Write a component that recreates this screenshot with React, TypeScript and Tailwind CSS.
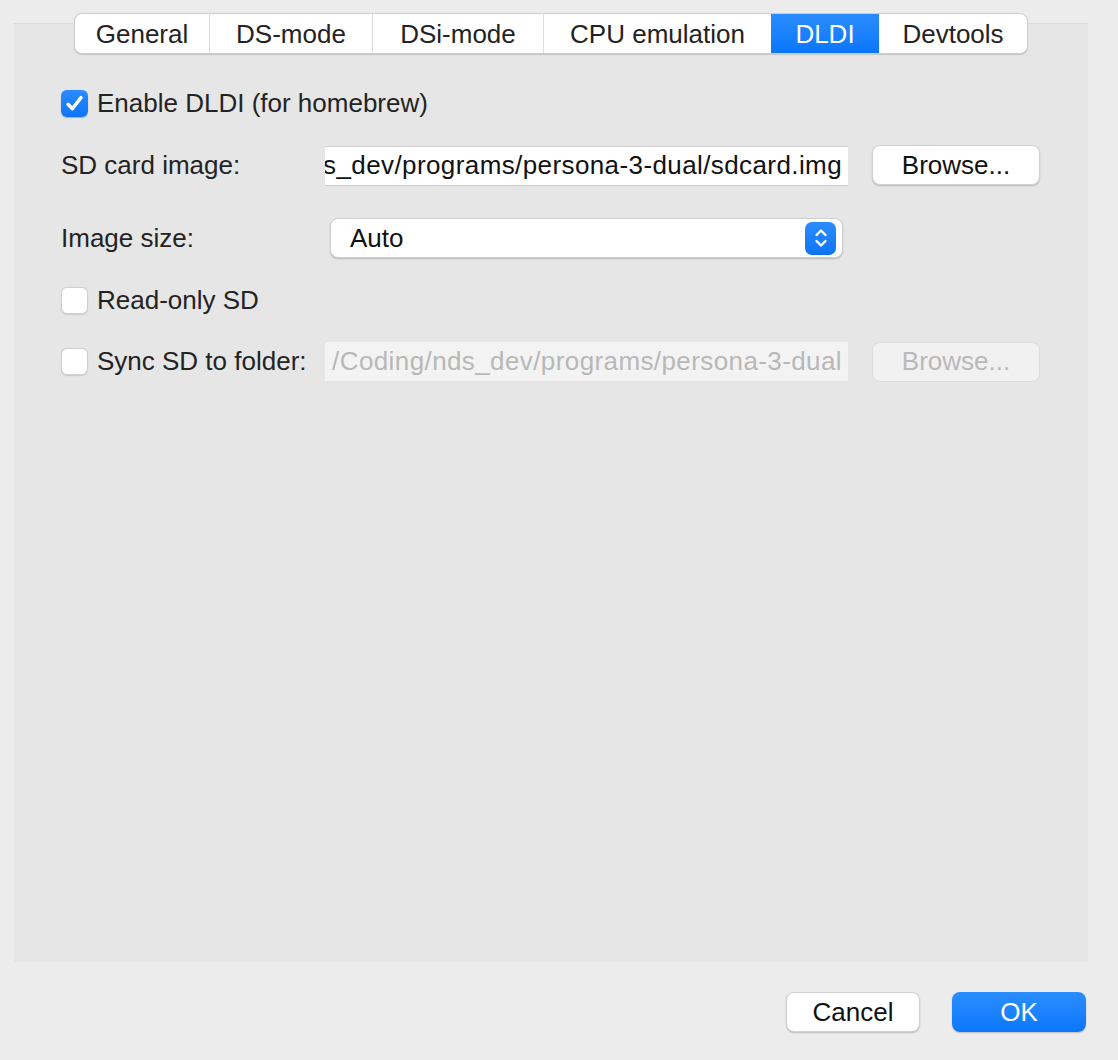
import { ReactNode } from "react"

const tabs = [
  { title: "General", w: "w-[134px]" },
  { title: "DS-mode", w: "w-[163px]" },
  { title: "DSi-mode", w: "w-[171px]" },
  { title: "CPU emulation", w: "w-[228px]" },
  { title: "DLDI", w: "w-[108px]" },
  { title: "Devtools", w: "w-[148px]" },
]

const activeTab = "DLDI"

function Checkbox({ checked }: { checked?: boolean }) {
  if (checked) {
    return (
      <span className="flex h-[27px] w-[27px] shrink-0 items-center justify-center rounded-[6px] bg-gradient-to-b from-[#2b8cff] to-[#0a74f5] shadow-[0_0.5px_1px_rgba(0,0,0,0.25)]">
        <svg width="21" height="21" viewBox="0 0 21 21" fill="none">
          <path
            d="M4 11.2 L8.4 15.8 L17 4.6"
            stroke="white"
            strokeWidth="3.4"
            strokeLinecap="round"
            strokeLinejoin="round"
          />
        </svg>
      </span>
    )
  }
  return (
    <span className="h-[27px] w-[27px] shrink-0 rounded-[6px] border border-[#cfcfcf] bg-white shadow-[0_0.5px_1px_rgba(0,0,0,0.12)]" />
  )
}

function PushButton({
  children,
  disabled,
  className = "",
}: {
  children: ReactNode
  disabled?: boolean
  className?: string
}) {
  return (
    <button
      className={`flex h-[40px] items-center justify-center rounded-[8px] border-[0.5px] ${
        disabled
          ? "border-[#dcdcdc] bg-[#f1f1f1] text-[#b9b9b9]"
          : "border-[#d0d0d0] bg-white text-[#111] shadow-[0_1px_1.5px_rgba(0,0,0,0.2)]"
      } ${className}`}
    >
      {children}
    </button>
  )
}

// path fields keep the tail of the path visible, like a scrolled text field
function PathField({ path, disabled }: { path: string; disabled?: boolean }) {
  return (
    <div
      className={`flex h-[39px] w-[523px] items-center justify-end overflow-hidden whitespace-nowrap pr-[6px] tracking-[0.4px] ${
        disabled
          ? "bg-[#f3f3f3] text-[#b8b8b8]"
          : "border-t border-[#cfcfcf] bg-white text-[#111] shadow-[0_1px_0_#c9c9c9]"
      }`}
    >
      <span>{path}</span>
    </div>
  )
}

export default function App() {
  return (
    <div
      className="flex h-[1060px] w-[1118px] flex-col bg-[#ececec] text-[26px] text-[#232323]"
      style={{ fontFamily: '"Liberation Sans", Arial, sans-serif' }}
    >
      <div className="ml-[14px] mt-[23px] h-[939px] w-[1074px] border-t border-[#dcdcdc] bg-[#e6e6e6]">
        {/* tab strip sits over the panel's top edge */}
        <div className="-mt-[11px] flex justify-center">
          <div className="flex h-[41px] overflow-hidden rounded-[8px] border-[0.5px] border-[#cdcdcd] bg-white shadow-[0_1px_1px_rgba(0,0,0,0.15)]">
            {tabs.map((tab, idx) => {
              const active = tab.title === activeTab
              const prevActive = idx > 0 && tabs[idx - 1].title === activeTab
              return (
                <div
                  key={tab.title}
                  className={`flex items-center justify-center pt-[1px] ${tab.w} ${
                    active
                      ? "bg-gradient-to-b from-[#2a8cff] to-[#0876fb] text-white"
                      : "text-[#232323]"
                  } ${
                    idx > 0 && !active && !prevActive
                      ? "border-l border-[#dedede]"
                      : ""
                  }`}
                >
                  {tab.title}
                </div>
              )
            })}
          </div>
        </div>

        <div className="flex flex-col pl-[47px]">
          <div className="mt-[36px] flex h-[26px] items-center gap-[9px]">
            <Checkbox checked />
            <span>Enable DLDI (for homebrew)</span>
          </div>

          <div className="mt-[29px] flex h-[40px] items-center">
            <span className="w-[264px]">SD card image:</span>
            <PathField path="ds_dev/programs/persona-3-dual/sdcard.img" />
            <PushButton className="ml-[24px] w-[168px]">Browse...</PushButton>
          </div>

          <div className="mt-[33px] flex h-[40px] items-center">
            <span className="w-[269px]">Image size:</span>
            <div className="flex h-[40px] w-[513px] items-center justify-between rounded-[8px] border-[0.5px] border-[#d0d0d0] bg-white pl-[19px] pr-[6px] shadow-[0_1px_1.5px_rgba(0,0,0,0.2)]">
              <span className="text-[#111]">Auto</span>
              <span className="flex h-[33px] w-[31px] items-center justify-center rounded-[7px] bg-gradient-to-b from-[#2b8dff] to-[#0a74f5]">
                <svg width="16" height="24" viewBox="0 0 16 24" fill="none">
                  <path
                    d="M3.5 9 L8 4.5 L12.5 9"
                    stroke="white"
                    strokeWidth="2.4"
                    strokeLinecap="round"
                    strokeLinejoin="round"
                  />
                  <path
                    d="M3.5 15 L8 19.5 L12.5 15"
                    stroke="white"
                    strokeWidth="2.4"
                    strokeLinecap="round"
                    strokeLinejoin="round"
                  />
                </svg>
              </span>
            </div>
          </div>

          <div className="mt-[29px] flex h-[26px] items-center gap-[9px]">
            <Checkbox />
            <span>Read-only SD</span>
          </div>

          <div className="mt-[29px] flex h-[39px] items-center">
            <div className="flex w-[264px] items-center gap-[9px]">
              <Checkbox />
              <span>Sync SD to folder:</span>
            </div>
            <PathField disabled path="/Coding/nds_dev/programs/persona-3-dual" />
            <PushButton disabled className="ml-[24px] w-[168px]">
              Browse...
            </PushButton>
          </div>
        </div>
      </div>

      <div className="mt-[30px] flex justify-end gap-[32px] pr-[32px]">
        <PushButton className="w-[134px]">Cancel</PushButton>
        <button className="flex h-[40px] w-[134px] items-center justify-center rounded-[8px] bg-gradient-to-b from-[#2a8dff] to-[#0a76fb] text-white shadow-[0_1px_1.5px_rgba(0,0,0,0.2)]">
          OK
        </button>
      </div>
    </div>
  )
}
